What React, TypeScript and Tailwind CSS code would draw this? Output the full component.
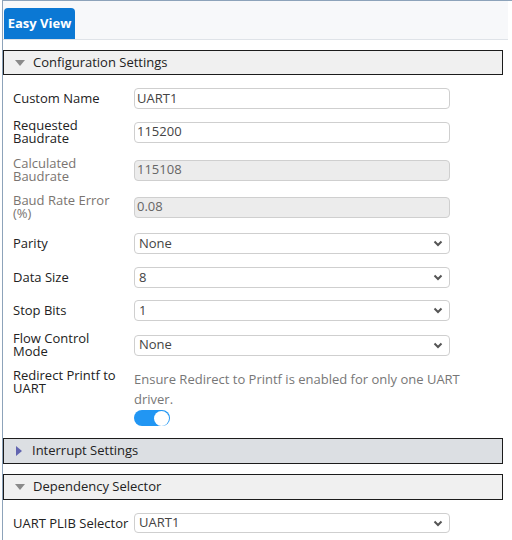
import React from 'react';

const font = { fontFamily: '"Open Sans", "Noto Sans", sans-serif' };

function Chevron() {
  return (
    <svg width="10" height="7" viewBox="0 0 10 7" className="shrink-0">
      <path d="M1.5 1.5 L5 5 L8.5 1.5" fill="none" stroke="#555" strokeWidth="2" />
    </svg>
  );
}

function SectionHeader({
  title,
  open,
  dark,
  tall,
}: {
  title: string;
  open: boolean;
  dark?: boolean;
  tall?: boolean;
}) {
  return (
    <div
      className={`flex w-[500px] items-center border border-[#1c1c1c] text-[13px] text-[#222] ${
        tall ? 'h-[26px]' : 'h-[25px]'
      } ${dark ? 'bg-[#dcdfe3]' : 'bg-[#f0f0f0]'}`}
    >
      {open ? (
        <span className="ml-[11px] mr-[8px] h-0 w-0 border-x-[5px] border-t-[6px] border-x-transparent border-t-[#8a8a8a]" />
      ) : (
        <span className="ml-[12px] mr-[10px] h-0 w-0 border-y-[5px] border-l-[6px] border-y-transparent border-l-[#6265b0]" />
      )}
      <span>{title}</span>
    </div>
  );
}

function Field({
  label,
  value,
  disabled,
  select,
  className,
  short,
}: {
  label: React.ReactNode;
  value: string;
  disabled?: boolean;
  select?: boolean;
  className: string;
  short?: boolean;
}) {
  return (
    <div className={`flex items-center ${className}`}>
      <div
        className={`w-[131px] pl-[10px] text-[13px] leading-[13px] ${
          disabled ? 'text-[#7a7470]' : 'text-[#222]'
        }`}
      >
        {label}
      </div>
      <div
        className={`flex w-[316px] items-center justify-between rounded-[4px] border border-[#cfcfcf] text-[13px] ${
          short ? 'h-[20px]' : 'h-[21px]'
        } ${disabled ? 'bg-[#ececec] text-[#666]' : 'bg-white text-[#444]'} ${
          select ? 'pl-[4px] pr-[6px]' : 'pl-[2px]'
        }`}
      >
        <span>{value}</span>
        {select && <Chevron />}
      </div>
    </div>
  );
}

export default function App() {
  return (
    <div className="h-[540px] w-[512px] overflow-hidden bg-white" style={font}>
      <div className="ml-[2px] h-full border-l border-t border-[#8da3ba]">
        <div className="mr-[4px] flex h-[39px] items-end border-b border-[#dfe3e8] bg-[#f7f8fa] pl-[1px]">
          <div className="flex h-[31px] w-[71px] items-center justify-center rounded-t-[4px] bg-[#0b78d4] text-[13px] font-bold text-white">
            Easy View
          </div>
        </div>

        <div className="mt-[10px]">
          <SectionHeader title="Configuration Settings" open />
        </div>

        <Field className="mt-[13px]" label="Custom Name" value="UART1" />
        <Field
          className="mt-[10px]"
          label={
            <>
              Requested
              <br />
              Baudrate
            </>
          }
          value="115200"
        />
        <Field
          className="mt-[12px]"
          disabled
          label={
            <>
              Calculated
              <br />
              Baudrate
            </>
          }
          value="115108"
        />
        <Field
          className="mt-[11px]"
          disabled
          label={
            <>
              Baud Rate Error
              <br />
              (%)
            </>
          }
          value="0.08"
        />
        <Field className="mt-[13px]" select label="Parity" value="None" />
        <Field className="mt-[13px]" select label="Data Size" value="8" />
        <Field className="mt-[12px]" select label="Stop Bits" value="1" />
        <Field
          className="mt-[11px]"
          select
          label={
            <>
              Flow Control
              <br />
              Mode
            </>
          }
          value="None"
        />

        <div className="mt-[11px] flex items-start">
          <div className="w-[131px] pl-[10px] text-[13px] leading-[13px] text-[#222]">
            Redirect Printf to
            <br />
            UART
          </div>
          <div className="w-[330px]">
            <div className="text-[13px] leading-[20px] text-[#777]">
              Ensure Redirect to Printf is enabled for only one UART driver.
            </div>
            <div className="mt-[1px] flex h-[16px] w-[36px] items-center justify-end rounded-full bg-[#2196f3] pr-[1px]">
              <div className="h-[15px] w-[15px] rounded-full bg-white" />
            </div>
          </div>
        </div>

        <div className="mt-[12px]">
          <SectionHeader title="Interrupt Settings" open={false} dark tall />
        </div>
        <div className="mt-[10px]">
          <SectionHeader title="Dependency Selector" open tall />
        </div>

        <Field className="mt-[13px]" select short label="UART PLIB Selector" value="UART1" />
      </div>
    </div>
  );
}
